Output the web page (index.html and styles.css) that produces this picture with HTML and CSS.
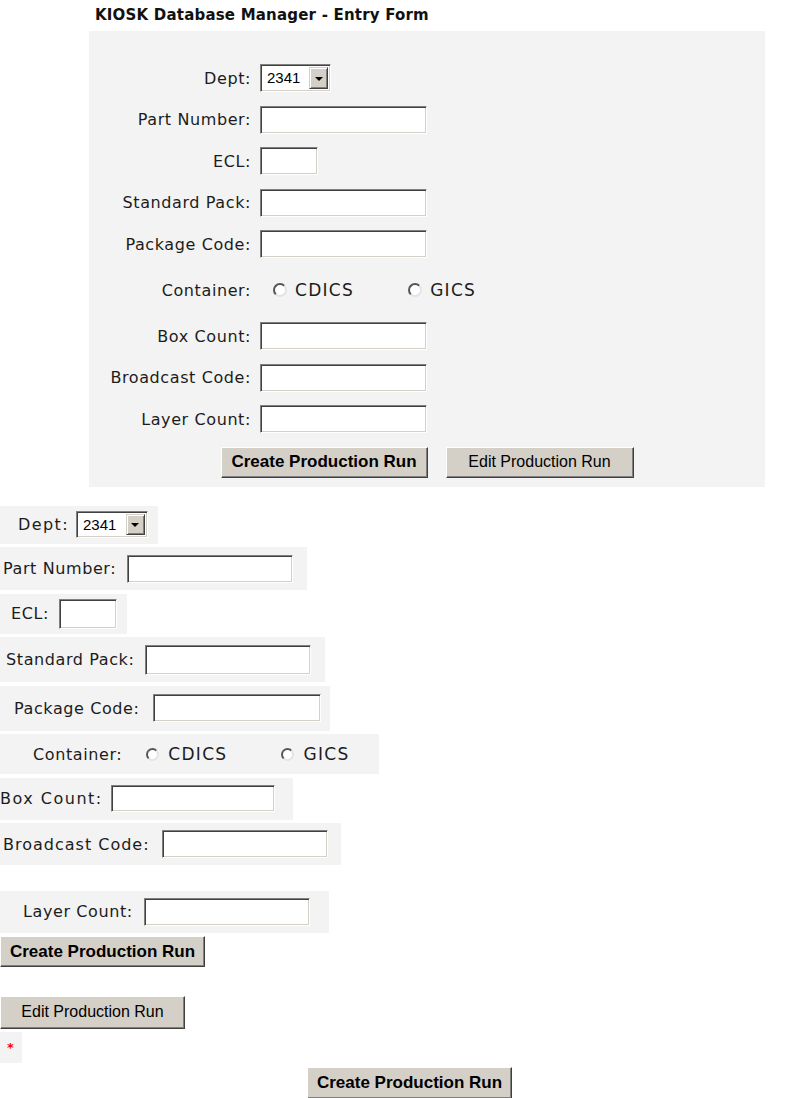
FILE: index.html
```html
<!DOCTYPE html>
<html lang="en">
<head>
<meta charset="UTF-8">
<title>KIOSK Database Manager - Entry Form</title>
<link rel="stylesheet" href="styles.css">
</head>
<body>
<div class="top">
<div class="title">KIOSK Database Manager - Entry Form</div>
<form class="panel">
<div class="grid">
<label class="lbl">Dept:</label>
<div class="select"><span class="select-value">2341</span><span class="select-btn"></span></div>

<label class="lbl">Part Number:</label>
<input class="field" type="text">

<label class="lbl">ECL:</label>
<input class="field field-short" type="text">

<label class="lbl">Standard Pack:</label>
<input class="field" type="text">

<label class="lbl">Package Code:</label>
<input class="field" type="text">

<label class="lbl lbl-radio">Container:</label>
<div class="radios">
<label class="opt"><input class="radio" type="radio" name="c1">CDICS</label>
<label class="opt"><input class="radio" type="radio" name="c1">GICS</label>
</div>

<label class="lbl">Box Count:</label>
<input class="field" type="text">

<label class="lbl">Broadcast Code:</label>
<input class="field" type="text">

<label class="lbl">Layer Count:</label>
<input class="field" type="text">
</div>
<div class="actions">
<button type="button" class="btn btn-create">Create Production Run</button>
<button type="button" class="btn btn-edit">Edit Production Run</button>
</div>
</form>
</div>

<div class="bottom">
<div class="line r-dept">
<label class="lbl">Dept:</label>
<div class="select"><span class="select-value">2341</span><span class="select-btn"></span></div>
</div>
<div class="line r-part">
<label class="lbl">Part Number:</label>
<input class="field" type="text">
</div>
<div class="line r-ecl">
<label class="lbl">ECL:</label>
<input class="field field-short" type="text">
</div>
<div class="line r-std">
<label class="lbl">Standard Pack:</label>
<input class="field" type="text">
</div>
<div class="line r-pkg">
<label class="lbl">Package Code:</label>
<input class="field" type="text">
</div>
<div class="line r-cont">
<label class="lbl">Container:</label>
<div class="radios">
<label class="opt"><input class="radio" type="radio" name="c2">CDICS</label>
<label class="opt"><input class="radio" type="radio" name="c2">GICS</label>
</div>
</div>
<div class="line r-box">
<label class="lbl">Box Count:</label>
<input class="field" type="text">
</div>
<div class="line r-bcast">
<label class="lbl">Broadcast Code:</label>
<input class="field" type="text">
</div>
<div class="line r-layer">
<label class="lbl">Layer Count:</label>
<input class="field" type="text">
</div>
<button type="button" class="btn btn-create">Create Production Run</button>
<button type="button" class="btn btn-edit btn-edit-low">Edit Production Run</button>
<div class="req">*</div>
<button type="button" class="btn btn-create btn-final">Create Production Run</button>
</div>
</body>
</html>
```
FILE: styles.css
```css
*{box-sizing:border-box;}
body{margin:0;background:#fff;color:#1c1c1c;font-family:"DejaVu Sans",Verdana,sans-serif;font-size:16px;}

/* top form */
.top{margin-left:89px;width:676px;}
.title{height:31px;line-height:31px;padding-left:6px;font-size:15px;font-weight:bold;color:#111;letter-spacing:0.2px;}
.panel{background:#f3f3f3;padding:33px 0 9px 0;margin:0;}
.grid{display:grid;grid-template-columns:162px auto;column-gap:9px;row-gap:13.5px;align-items:center;justify-items:start;}
.grid .lbl{justify-self:end;}
.grid .lbl-radio{height:37px;line-height:37px;}
.lbl{font-size:16px;letter-spacing:0.6px;white-space:nowrap;color:#1c1c1c;}

.field{width:167px;height:28px;margin:0;padding:0 3px;background:#fff;border:1px solid;border-color:#808080 #fff #fff #808080;box-shadow:inset 1px 1px 0 #404040,inset -1px -1px 0 #d4d0c8;font-size:14px;outline:none;}
.field-short{width:58px;}

.select{display:flex;width:71px;height:28px;background:#fff;border:1px solid;border-color:#808080 #fff #fff #808080;box-shadow:inset 1px 1px 0 #404040,inset -1px -1px 0 #d4d0c8;padding:2px;}
.select-value{flex:1;font-family:"Liberation Sans",Arial,sans-serif;font-size:15px;line-height:22px;padding-left:4px;color:#000;}
.select-btn{width:19px;display:flex;align-items:center;justify-content:center;background:#d4d0c8;border:1px solid;border-color:#d4d0c8 #404040 #404040 #d4d0c8;box-shadow:inset 1px 1px 0 #fff,inset -1px -1px 0 #808080;}
.select-btn::after{content:"";border-left:4px solid transparent;border-right:4px solid transparent;border-top:4px solid #000;margin-top:1px;}

.radios{display:flex;align-items:center;}
.opt{display:inline-flex;align-items:center;gap:8px;font-size:17px;letter-spacing:1.3px;color:#1c1c1c;}
.opt + .opt{margin-left:54px;}
.grid .radios{margin-left:13px;}
.radio{appearance:none;-webkit-appearance:none;margin:0;width:14px;height:14px;border-radius:50%;background:#fff;border:2px solid;border-color:#555 #e4e4e4 #e4e4e4 #555;}

.actions{display:flex;justify-content:center;gap:18px;margin-top:13.5px;}
.btn{height:31px;margin:0;padding:0;background:#d4d0c8;color:#000;border:1px solid;border-color:#fff #404040 #404040 #fff;box-shadow:inset -1px -1px 0 #808080;font-family:"Liberation Sans",Arial,sans-serif;cursor:pointer;}
.btn-create{width:207px;font-size:17px;font-weight:bold;}
.btn-edit{width:188px;font-size:16px;}

/* plain listing below */
.bottom{display:flex;flex-direction:column;align-items:flex-start;gap:3.5px;margin-top:19px;}
.line{display:flex;align-items:center;background:#f3f3f3;height:42px;padding-left:var(--pl);padding-right:var(--pr);gap:var(--gap);}
.line .field{width:166px;}
.line .field-short{width:58px;}
.r-dept{--pl:18px;--pr:10px;--gap:7px;height:38px;}
.r-dept .lbl{letter-spacing:1.4px;}
.r-dept .select{width:72px;height:27px;}
.r-part{--pl:3px;--pr:14px;--gap:11px;height:43px;}
.r-ecl{--pl:11px;--pr:10px;--gap:10px;height:40px;}
.r-ecl .field{height:30px;}
.r-std{--pl:6px;--pr:14px;--gap:11px;height:45px;}
.r-std .field{height:30px;}
.r-pkg{--pl:14px;--pr:9px;--gap:13px;height:45px;}
.r-pkg .field{width:168px;}
.r-cont{--pl:33px;--pr:29px;--gap:24px;height:40px;}
.r-cont .radio{width:13px;height:13px;}
.r-cont .opt{gap:9px;}
.r-box{--pl:0px;--pr:18px;--gap:8px;}
.r-box .lbl{letter-spacing:1.5px;}
.r-box .field{width:164px;height:27px;}
.r-bcast{--pl:3px;--pr:13px;--gap:12px;}
.r-bcast .lbl{letter-spacing:1px;}
.r-layer{--pl:23px;--pr:19px;--gap:11px;margin-top:22px;}
.bottom .btn-create{width:205px;}
.btn-edit-low{width:185px;height:33px;margin-top:25px;}
.req{width:22px;height:31px;background:#f3f3f3;color:#f00;font-size:13px;font-weight:bold;line-height:31px;padding-left:7px;}
.btn-final{margin-left:307px;height:32px;}
```
